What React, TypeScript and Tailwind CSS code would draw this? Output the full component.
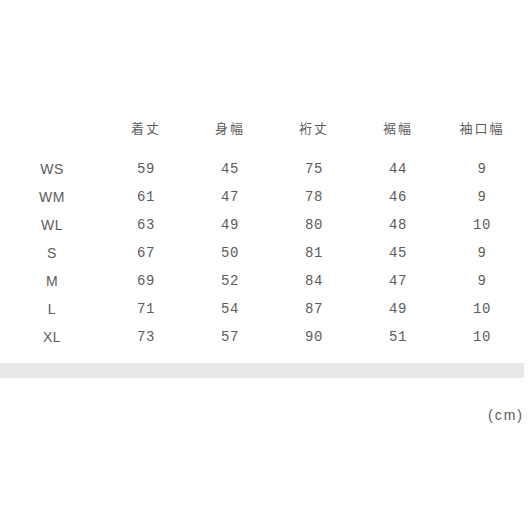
const headers = ["着丈", "身幅", "裄丈", "裾幅", "袖口幅"];

const rows: [string, number[]][] = [
  ["WS", [59, 45, 75, 44, 9]],
  ["WM", [61, 47, 78, 46, 9]],
  ["WL", [63, 49, 80, 48, 10]],
  ["S", [67, 50, 81, 45, 9]],
  ["M", [69, 52, 84, 47, 9]],
  ["L", [71, 54, 87, 49, 10]],
  ["XL", [73, 57, 90, 51, 10]],
];

const cols = "grid grid-cols-[104px_84px_84px_84px_84px_84px] items-center";

const App = () => {
  return (
    <div className="w-[529px] h-[529px] bg-white text-[#5c5c5c] pt-[114px]">
      <div
        className={`${cols} h-[28px] text-[13px] tracking-[2px]`}
        style={{ fontFamily: '"Noto Sans CJK JP", sans-serif' }}
      >
        <div />
        {headers.map((h) => (
          <div key={h} className="text-center">
            {h}
          </div>
        ))}
      </div>
      <div className="mt-[13px]">
        {rows.map(([size, vals]) => (
          <div key={size} className={`${cols} h-[28px]`}>
            <div className="text-center text-[14px] tracking-[0.5px] font-['Liberation_Sans',sans-serif]">
              {size}
            </div>
            {vals.map((v, i) => (
              <div key={i} className="text-center text-[14px] tracking-[0.5px] font-['Liberation_Mono',monospace]">
                {v}
              </div>
            ))}
          </div>
        ))}
      </div>
      <div className="mt-[12px] h-[15px] w-[524px] bg-[#e8e8e8]" />
      <div className="mt-[27px] w-[524px] text-right text-[14px] tracking-[2px] font-['Liberation_Sans',sans-serif] leading-[20px]">
        (cm)
      </div>
    </div>
  );
};

export default App;
